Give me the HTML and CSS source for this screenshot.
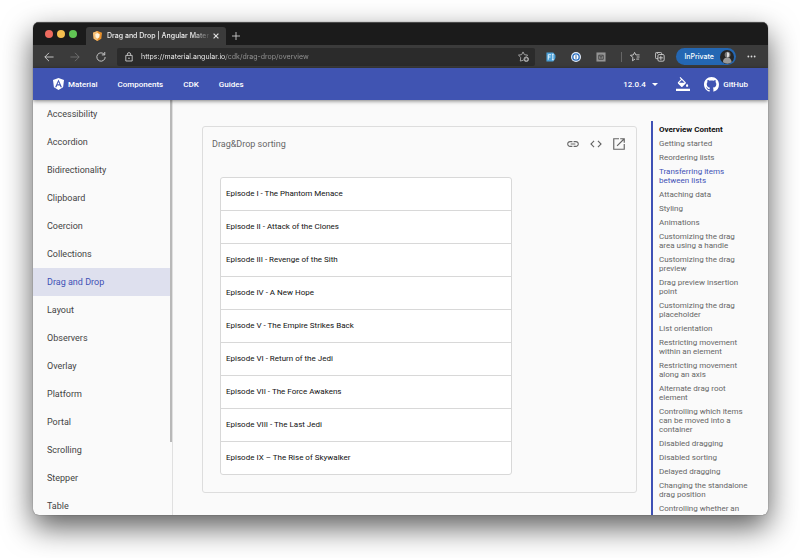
FILE: index.html
```html
<!DOCTYPE html>
<html lang="en">
<head>
<meta charset="utf-8">
<title>Drag and Drop | Angular Material</title>
<link rel="stylesheet" href="styles.css">
</head>
<body>
<div class="window">
  <div class="tabbar">
    <div class="lights"><span class="light red"></span><span class="light yellow"></span><span class="light green"></span></div>
    <div class="tab">
      <svg class="favicon" viewBox="0 0 20 22"><path fill="#e8912d" d="M10 0 20 3.500 18.500 17 10 22 1.500 17 0 3.500z"/><path fill="#f8c27a" d="M10 0v22l-8.500-5L0 3.500z"/><path fill="#fff3dc" d="M10 4.500 15 7l-1 7-4 3-4-3-1-7z"/></svg>
      <span class="tab-title">Drag and Drop | Angular Mater</span>
      <button class="icon-button tab-close" aria-label="Close tab"><svg viewBox="0 0 10 10"><path d="m1 1 8 8M9 1 1 9"/></svg></button>
    </div>
    <button class="icon-button new-tab" aria-label="New tab"><svg viewBox="0 0 10 10"><path d="M5 0v10M0 5h10"/></svg></button>
  </div>

  <div class="toolbar">
    <button class="icon-button nav-button" aria-label="Back"><svg viewBox="0 0 24 24"><path d="M23 12H2M12 2 2 12l10 10"/></svg></button>
    <button class="icon-button nav-button" aria-label="Forward" disabled><svg viewBox="0 0 24 24"><path d="M1 12h21M12 2l10 10-10 10"/></svg></button>
    <button class="icon-button nav-button" aria-label="Reload"><svg viewBox="0 0 24 24"><path d="M20 6a10 10 0 1 0 2 6M21 0v7h-7"/></svg></button>
    <div class="address">
      <svg class="lock" viewBox="0 0 20 24"><path d="M2 8h16v14H2zM6 8V5a4 4 0 0 1 8 0v3"/><circle cx="10" cy="15" r="1"/></svg>
      <input class="url" type="text" aria-label="Address" value="https://material.angular.io/cdk/drag-drop/overview">
      <button class="icon-button favorite" aria-label="Add to favorites"><svg viewBox="0 0 24 24"><path d="M12 20 5 22l1-8-5-5 7-1 3-6 3 6 7 1-3 3"/><circle cx="18" cy="18" r="5" fill="#aaa"/><path stroke="#2b2b2b" d="M18 15v6M15 18h6"/></svg></button>
    </div>
    <button class="icon-button extension" aria-label="Font extension"><svg viewBox="0 0 22 22"><path class="solid" fill="#4b9fd5" d="M1 1h15q5 4 5 10t-5 10H1z"/><path stroke="#eef8ff" d="M5 17V6h6M5 11h5M13 5h4M15 5v12M13 17h4"/></svg></button>
    <button class="icon-button extension" aria-label="Password manager"><svg viewBox="0 0 22 22"><circle class="solid" cx="11" cy="11" r="11" fill="#e4eefb"/><circle class="ring" cx="11" cy="11" r="7"/><path stroke="#1d4f92" d="M11 7v8"/></svg></button>
    <button class="icon-button extension" aria-label="Disabled extension"><svg viewBox="0 0 22 22"><rect class="solid" x="1" y="1" width="20" height="20" fill="#949494"/><path stroke="#444" d="M6 7h10v9H6zM7 8l4 3 4-3M9 13h4"/></svg></button>
    <span class="divider"></span>
    <button class="icon-button tool" aria-label="Favorites"><svg viewBox="0 0 24 24"><path d="m12 17-6 4 1-8-6-5 7-1 3-6 3 6h9M16 12h7M15 17h7"/></svg></button>
    <button class="icon-button tool" aria-label="Collections"><svg viewBox="0 0 24 24"><path d="M7 16H4q-3 0-3-3V4q0-3 3-3h9q3 0 3 3v2M7 9q0-3 3-3h9q3 0 3 3v10q0 3-3 3h-9q-3 0-3-3zM14 9v10M9 14h10M4 5l4-4"/></svg></button>
    <button class="profile">InPrivate<svg class="avatar" viewBox="0 0 24 24"><circle cx="12" cy="12" r="12" fill="#252525"/><circle cx="13" cy="8" r="5" fill="#777"/><path fill="#999" d="M5 21q0-8 8-8 6 0 7 8-7 5-15 0"/><path fill="#ddd" d="M12 4q4 0 4 4t-4 5z"/></svg></button>
    <button class="icon-button more" aria-label="Settings and more"><svg viewBox="0 0 20 6"><g class="solid" fill="#ddd"><circle cx="3" cy="3" r="2"/><circle cx="10" cy="3" r="2"/><circle cx="17" cy="3" r="2"/></g></svg></button>
  </div>

  <header class="site-header">
    <nav class="site-nav" aria-label="Site">
      <a class="brand" href="#"><svg class="brand-logo" viewBox="0 0 24 26"><path fill="#fff" d="M12 0 24 4l-2 16-10 6-10-6L0 4z"/><path fill="#4054b2" fill-rule="evenodd" d="M12 3 4.500 20h3l1.500-4h6l1.500 4h3zM12 8.500l2.200 5H9.800z"/></svg>Material</a>
      <a href="#">Components</a>
      <a href="#">CDK</a>
      <a href="#">Guides</a>
    </nav>
    <div class="version">
      <select aria-label="Version"><option>12.0.4</option></select>
      <svg class="caret" viewBox="0 0 10 5"><path fill="#fff" d="M0 0h10L5 5z"/></svg>
    </div>
    <button class="theme" aria-label="Select a theme"><svg viewBox="0 0 24 24"><path fill="#fff" d="M16.560 8.940 7.620 0 6.210 1.410l2.380 2.380-5.150 5.150c-.59.59-.59 1.540 0 2.120l5.500 5.500c.29.290.68.440 1.060.440s.770-.150 1.060-.440l5.500-5.500c.59-.580.59-1.530 0-2.120zM5.210 10 10 5.210 14.790 10zM19 11.500s-2 2.170-2 3.500c0 1.100.9 2 2 2s2-.9 2-2c0-1.330-2-3.500-2-3.500zM0 20h24v4H0z"/></svg></button>
    <a class="github" href="#"><svg viewBox="0 0 16 16"><path fill="#fff" d="M8 0C3.580 0 0 3.580 0 8c0 3.540 2.290 6.530 5.470 7.590.4.070.55-.170.55-.380 0-.190-.010-.820-.010-1.490-2.010.370-2.530-.490-2.690-.940-.090-.230-.480-.940-.820-1.130-.280-.150-.680-.520-.010-.530.630-.010 1.080.580 1.230.820.720 1.210 1.870.870 2.330.660.070-.520.280-.870.510-1.070-1.780-.2-3.640-.890-3.640-3.950 0-.870.310-1.590.820-2.150-.080-.2-.360-1.020.080-2.120 0 0 .670-.210 2.200.820.640-.180 1.320-.270 2-.270s1.360.090 2 .270c1.530-1.040 2.200-.820 2.200-.820.440 1.100.160 1.920.080 2.120.510.560.820 1.270.820 2.150 0 3.070-1.870 3.750-3.650 3.950.290.250.540.730.540 1.480 0 1.070-.010 1.930-.010 2.200 0 .210.150.460.550.380A8.010 8.010 0 0 0 16 8c0-4.420-3.580-8-8-8z"/></svg>GitHub</a>
  </header>

  <div class="page">
    <nav class="sidebar" aria-label="Component dev kit">
      <a href="#">Accessibility</a>
      <a href="#">Accordion</a>
      <a href="#">Bidirectionality</a>
      <a href="#">Clipboard</a>
      <a href="#">Coercion</a>
      <a href="#">Collections</a>
      <a href="#" class="active" aria-current="page">Drag and Drop</a>
      <a href="#">Layout</a>
      <a href="#">Observers</a>
      <a href="#">Overlay</a>
      <a href="#">Platform</a>
      <a href="#">Portal</a>
      <a href="#">Scrolling</a>
      <a href="#">Stepper</a>
      <a href="#">Table</a>
      <span class="scroll-thumb"></span>
    </nav>

    <main class="content">
      <section class="example">
        <header class="example-header">
          <h1>Drag&amp;Drop sorting</h1>
          <button class="example-action" aria-label="Copy link"><svg viewBox="0 0 24 24"><path d="M3.900 12c0-1.710 1.390-3.100 3.100-3.100h4V7H7c-2.760 0-5 2.240-5 5s2.240 5 5 5h4v-1.900H7c-1.710 0-3.100-1.390-3.100-3.100zM8 13h8v-2H8zm9-6h-4v1.900h4c1.710 0 3.100 1.390 3.100 3.100s-1.390 3.100-3.100 3.100h-4V17h4c2.760 0 5-2.240 5-5s-2.240-5-5-5z"/></svg></button>
          <button class="example-action" aria-label="View code"><svg viewBox="0 0 24 24"><path d="M9.400 16.600 4.800 12l4.600-4.600L8 6l-6 6 6 6zm5.200 0 4.600-4.600-4.600-4.600L16 6l6 6-6 6z"/></svg></button>
          <button class="example-action" aria-label="Open in new window"><svg viewBox="0 0 24 24"><path d="M20 20H4V4h8V2H2v20h20V12h-2zM14 2v2h4.600L8 14.600 9.400 16 20 5.400V10h2V2z"/></svg></button>
        </header>
        <ul class="drag-list">
          <li>Episode I - The Phantom Menace</li>
          <li>Episode II - Attack of the Clones</li>
          <li>Episode III - Revenge of the Sith</li>
          <li>Episode IV - A New Hope</li>
          <li>Episode V - The Empire Strikes Back</li>
          <li>Episode VI - Return of the Jedi</li>
          <li>Episode VII - The Force Awakens</li>
          <li>Episode VIII - The Last Jedi</li>
          <li>Episode IX – The Rise of Skywalker</li>
        </ul>
      </section>
    </main>

    <nav class="toc" aria-label="Overview Content">
      <h2>Overview Content</h2>
      <a href="#">Getting started</a>
      <a href="#">Reordering lists</a>
      <a href="#" class="active">Transferring items between lists</a>
      <a href="#">Attaching data</a>
      <a href="#">Styling</a>
      <a href="#">Animations</a>
      <a href="#">Customizing the drag area using a handle</a>
      <a href="#">Customizing the drag preview</a>
      <a href="#">Drag preview insertion point</a>
      <a href="#">Customizing the drag placeholder</a>
      <a href="#">List orientation</a>
      <a href="#">Restricting movement within an element</a>
      <a href="#">Restricting movement along an axis</a>
      <a href="#">Alternate drag root element</a>
      <a href="#">Controlling which items can be moved into a container</a>
      <a href="#">Disabled dragging</a>
      <a href="#">Disabled sorting</a>
      <a href="#">Delayed dragging</a>
      <a href="#">Changing the standalone drag position</a>
      <a href="#">Controlling whether an</a>
    </nav>
  </div>
</div>
</body>
</html>
```
FILE: styles.css
```css
* { box-sizing: border-box; }

body {
  margin: 0;
  height: 100vh;
  padding: 22px 32px 43px 33px;
  background: #fff;
  font-family: Roboto, "Liberation Sans", sans-serif;
  overflow: hidden;
}

a { color: inherit; text-decoration: none; }

button, select, input {
  margin: 0;
  padding: 0;
  border: 0;
  background: none;
  color: inherit;
  font: inherit;
}

svg { display: block; }

.window {
  display: flex;
  flex-direction: column;
  height: 100%;
  border-radius: 6px;
  overflow: hidden;
  background: #fafafa;
  box-shadow: 0 0 1px rgba(0, 0, 0, .7), 0 12px 30px rgba(0, 0, 0, .65);
}

/* Browser chrome */
.tabbar {
  display: flex;
  align-items: flex-end;
  flex: none;
  height: 23px;
  background: #1b1b1b;
  border-top: 1px solid #4a4a4a;
  color: #eee;
  font-family: Inter, sans-serif;
}

.lights { display: flex; align-items: center; gap: 4px; height: 22px; padding-left: 12px; width: 53px; }
.light { width: 8px; height: 8px; border-radius: 50%; }
.red { background: #ed6a5e; }
.yellow { background: #f5bf4f; }
.green { background: #61c554; }

.tab {
  display: flex;
  align-items: center;
  width: 140px;
  height: 18px;
  padding: 0 7px;
  border-radius: 3px 3px 0 0;
  background: #3b3b3b;
}
.favicon { flex: none; width: 9px; height: 10px; }
.tab-title {
  flex: 1;
  margin: 0 2px 0 5px;
  white-space: nowrap;
  font-size: 7px;
  font-weight: 500;
  line-height: 10px;
  mask-image: linear-gradient(90deg, #000 82%, transparent);
}

.icon-button { flex: none; display: grid; place-items: center; }
.icon-button svg { fill: none; stroke: #ddd; stroke-width: 2; }
.icon-button .solid { stroke: none; }
.icon-button .ring { fill: #fff; stroke: #2b6fc0; stroke-width: 3; }
.tab-close svg { width: 6px; height: 6px; }
.new-tab { height: 18px; margin-left: 6px; }
.new-tab svg { width: 8px; height: 8px; stroke-width: 1; }

.toolbar {
  display: flex;
  align-items: center;
  flex: none;
  height: 23px;
  padding: 0 12px 0 11px;
  background: #3b3b3b;
  color: #fff;
  font-family: Inter, sans-serif;
}
.nav-button { width: 10px; margin-right: 16px; }
.nav-button svg { width: 10px; height: 10px; }
.nav-button:disabled svg { stroke: #777; }
.nav-button:nth-child(3) { margin-right: 11px; }

.address {
  flex: 1;
  display: flex;
  align-items: center;
  height: 18px;
  margin-right: 11px;
  padding: 0 6px 0 8px;
  border-radius: 2px;
  background: #2b2b2b;
}
.lock { width: 8px; height: 10px; fill: none; stroke: #ddd; stroke-width: 2; }
.url {
  flex: 1;
  min-width: 0;
  height: 14px;
  margin-left: 8px;
  font-size: 7px;
  background: linear-gradient(90deg, #fff 85px, #999 85px) text;
  color: transparent;
}
.favorite svg { width: 11px; height: 11px; stroke: #aaa; }
.extension { width: 10px; margin-right: 15px; }
.extension svg { width: 10px; height: 10px; }
.divider { width: 1px; height: 10px; margin-right: 8px; background: #666; }
.tool { width: 10px; margin-right: 15px; }
.tool svg { width: 10px; height: 10px; }
.profile {
  display: flex;
  align-items: center;
  gap: 6px;
  height: 17px;
  margin: 0 11px 0 -4px;
  padding: 0 2px 0 8px;
  border-radius: 9px;
  background: #2467b3;
  font-size: 7px;
  font-weight: 500;
}
.avatar { width: 14px; height: 14px; }
.more svg { width: 9px; height: 3px; }

/* Site header */
.site-header {
  position: relative;
  z-index: 1;
  display: flex;
  align-items: center;
  flex: none;
  height: 32px;
  padding: 0 20px;
  background: #4054b2;
  box-shadow: 0 1px 4px rgba(0, 0, 0, .5);
  color: #fff;
  font-size: 8px;
  font-weight: 500;
}
.site-nav { flex: 1; display: flex; align-items: center; gap: 20px; }
.brand { display: flex; align-items: center; gap: 4px; }
.brand-logo { width: 11px; height: 12px; }
.version { display: flex; align-items: center; gap: 6px; margin-right: 18px; }
.version select { appearance: none; }
.caret { width: 6px; height: 3px; }
.theme { margin-right: 14px; }
.theme svg { width: 14px; height: 14px; }
.github { display: flex; align-items: center; gap: 4px; }
.github svg { width: 15px; height: 15px; }

/* Page */
.page {
  flex: 1;
  min-height: 0;
  display: grid;
  grid-template-columns: 140px 1fr 117px;
  grid-template-rows: minmax(0, 1fr);
}

.sidebar {
  position: relative;
  overflow: hidden;
  border-right: 1px solid #e0e0e0;
  color: #444;
  font-size: 9px;
  line-height: 28px;
}
.sidebar a { display: block; margin-right: 2px; padding-left: 14px; }
.sidebar .active { background: #dee0ee; color: #3f51b5; }
.scroll-thumb {
  position: absolute;
  top: 0;
  right: 0;
  width: 2px;
  height: 342px;
  background: #b8b8b8;
}

.content { padding: 26px 14px 22px 29px; }
.example {
  padding-bottom: 17px;
  border: 1px solid #ddd;
  border-radius: 3px;
}
.example-header {
  display: flex;
  align-items: center;
  gap: 9px;
  height: 34px;
  padding: 0 10px 0 9px;
  color: #666;
}
.example-header h1 { flex: 1; margin: 0; font-size: 9px; font-weight: 400; }
.example-action svg { width: 14px; height: 14px; fill: #666; }
.drag-list {
  width: 292px;
  max-width: 100%;
  margin: 16px 0 0 17px;
  padding: 0;
  list-style: none;
  border: 1px solid #d8d8d8;
  border-radius: 3px;
  background: #fff;
  color: #111;
  font-size: 8px;
  line-height: 32px;
}
.drag-list li { padding: 0 5px; border-bottom: 1px solid #d8d8d8; }
.drag-list li:last-child { border-bottom: 0; }

.toc {
  margin-top: 21px;
  padding: 4px 19px 0 6px;
  overflow: hidden;
  border-left: 2px solid #3f51b5;
  color: #666;
  font-size: 8px;
  line-height: 9px;
}
.toc h2 { margin: 0 0 5px; color: #111; font-size: 8px; font-weight: 700; }
.toc a { display: block; margin-bottom: 5px; }
.toc .active { color: #3f51b5; }
```
